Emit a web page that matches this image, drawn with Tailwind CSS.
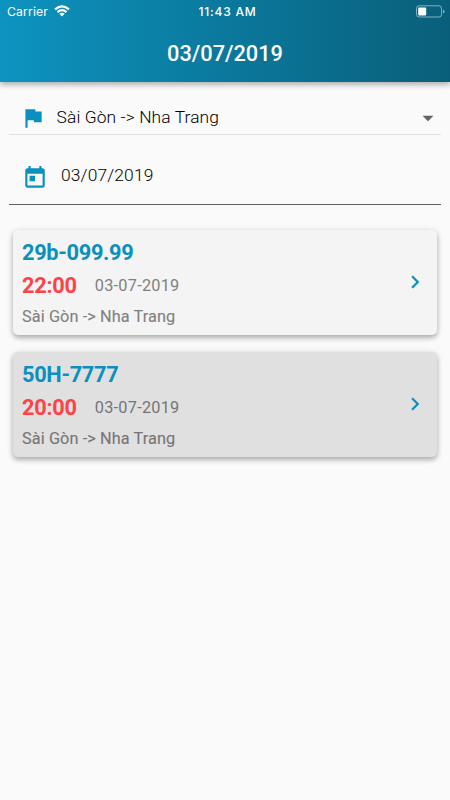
<!DOCTYPE html>
<html lang="vi">
<head>
<meta charset="utf-8">
<meta name="viewport" content="width=device-width, initial-scale=1">
<title>03/07/2019</title>
<script src="https://cdn.jsdelivr.net/npm/@tailwindcss/browser@4"></script>
</head>
<body class="min-h-screen bg-[#fafafa] font-[Roboto,sans-serif]">
<header class="h-[82px] bg-linear-to-r from-[#0d93c0] to-[#095f7a] text-white shadow-[0_3px_5px_rgba(0,0,0,0.2),0_1px_8px_rgba(0,0,0,0.16)]">
  <div class="grid h-[23px] grid-cols-3 items-center pl-[7px] pr-[5px]">
    <div class="flex items-center gap-[6px]">
      <span class="font-[Inter,sans-serif] text-[12.3px] leading-[22px] tracking-[0.1px]">Carrier</span>
      <svg class="mb-px h-[12px] w-[16px]" viewBox="0 0 16 12" fill="none" stroke="#fff" stroke-width="2.1"><path d="M1 4.4Q8-1.8 15 4.4M3.5 7.1Q8 3.1 12.5 7.1"/><path d="M5.4 8.8Q8 6.9 10.6 8.8L8 11.5Z" fill="#fff" stroke="none"/></svg>
    </div>
    <span class="pl-[3px] text-center font-[Inter,sans-serif] text-[12px] leading-[22px] font-medium tracking-[0.8px]">11:43 AM</span>
    <svg class="mb-px h-[13px] w-[29px] justify-self-end" viewBox="0 0 29 13"><rect x=".5" y=".8" width="25" height="11.2" rx="2.6" fill="none" stroke="#fff" stroke-opacity=".5"/><rect x="2.2" y="2.5" width="8" height="8" rx="1" fill="#fff"/><path d="M27 4.5q1.6.4 1.6 2t-1.6 2z" fill="#fff" fill-opacity=".5"/></svg>
  </div>
  <h1 class="pt-[15px] text-center text-[21.75px] leading-8 font-medium">03/07/2019</h1>
</header>

<main class="px-[9px]">
  <div class="flex h-[53px] items-center border-b border-[#e0e0e0] pt-[18px] pl-[10.6px] pr-px">
    <svg class="mt-px h-[26px] w-[26px] shrink-0" viewBox="0 0 24 24" fill="#0990c0"><path d="M14.4 6L14 4H5v17h2v-7h5.6l.4 2h7V6z"/></svg>
    <span class="pl-[11px] text-[17.4px] leading-6 font-light tracking-[0.1px] text-black">Sài Gòn -&gt; Nha Trang</span>
    <svg class="mt-px ml-auto h-[26px] w-[26px] -mr-px" viewBox="0 0 24 24" fill="#616161"><path d="M7 10h10l-5 5z"/></svg>
  </div>
  <div class="flex h-[70px] items-center border-b border-[#616161] pl-[13px]">
    <svg class="mt-[17px] h-[26px] w-[26px] shrink-0" viewBox="0 0 24 24" fill="#0990c0"><path d="M19 3h-1V1h-2v2H8V1H6v2H5c-1.11 0-1.99.9-1.99 2L3 19c0 1.1.89 2 2 2h14c1.1 0 2-.9 2-2V5c0-1.1-.9-2-2-2zm0 16H5V8h14v11zM7 10h5v5H7z"/></svg>
    <span class="mt-[10px] pl-[13px] text-[17.4px] leading-6 font-light tracking-[0.15px] text-black">03/07/2019</span>
  </div>

  <section class="space-y-[17px] px-1 pt-[25px]">
    <a class="flex h-[105px] items-center justify-between rounded-[5px] bg-[#f4f4f4] pr-[9px] pl-[9px] shadow-[0_3px_5px_rgba(0,0,0,0.24),0_1px_7px_rgba(0,0,0,0.13)]">
      <div class="pt-[2px]">
        <h2 class="text-[21.75px] leading-[34px] font-bold tracking-[-0.3px] text-[#0a8fbf]">29b-099.99</h2>
        <div class="flex items-center gap-[18px] pb-[2px]"><span class="text-[21.75px] leading-[31px] font-bold tracking-[-0.25px] text-[#ff4245]">22:00</span><span class="text-[16.3px] leading-6 tracking-[0.25px] text-[#808080]">03-07-2019</span></div>
        <p class="text-[16.3px] leading-7 tracking-[0.09px] text-[#808080] [-webkit-text-stroke:0.1px]">Sài Gòn -&gt; Nha Trang</p>
      </div>
      <svg class="mb-px h-[26px] w-[26px]" viewBox="0 0 24 24" fill="#0a8fbf"><path d="M10 6L8.59 7.41 13.17 12l-4.58 4.59L10 18l6-6z"/></svg>
    </a>
    <a class="flex h-[105px] items-center justify-between rounded-[5px] bg-[#e0e0e0] pr-[9px] pl-[9px] shadow-[0_3px_5px_rgba(0,0,0,0.24),0_1px_7px_rgba(0,0,0,0.13)]">
      <div class="pt-[2px]">
        <h2 class="text-[21.75px] leading-[34px] font-bold tracking-[-0.3px] text-[#0a8fbf]">50H-7777</h2>
        <div class="flex items-center gap-[18px] pb-[2px]"><span class="text-[21.75px] leading-[31px] font-bold tracking-[-0.25px] text-[#ff4245]">20:00</span><span class="text-[16.3px] leading-6 tracking-[0.25px] text-[#757575]">03-07-2019</span></div>
        <p class="text-[16.3px] leading-7 tracking-[0.09px] text-[#757575] [-webkit-text-stroke:0.1px]">Sài Gòn -&gt; Nha Trang</p>
      </div>
      <svg class="mb-px h-[26px] w-[26px]" viewBox="0 0 24 24" fill="#0a8fbf"><path d="M10 6L8.59 7.41 13.17 12l-4.58 4.59L10 18l6-6z"/></svg>
    </a>
  </section>
</main>
</body>
</html>
